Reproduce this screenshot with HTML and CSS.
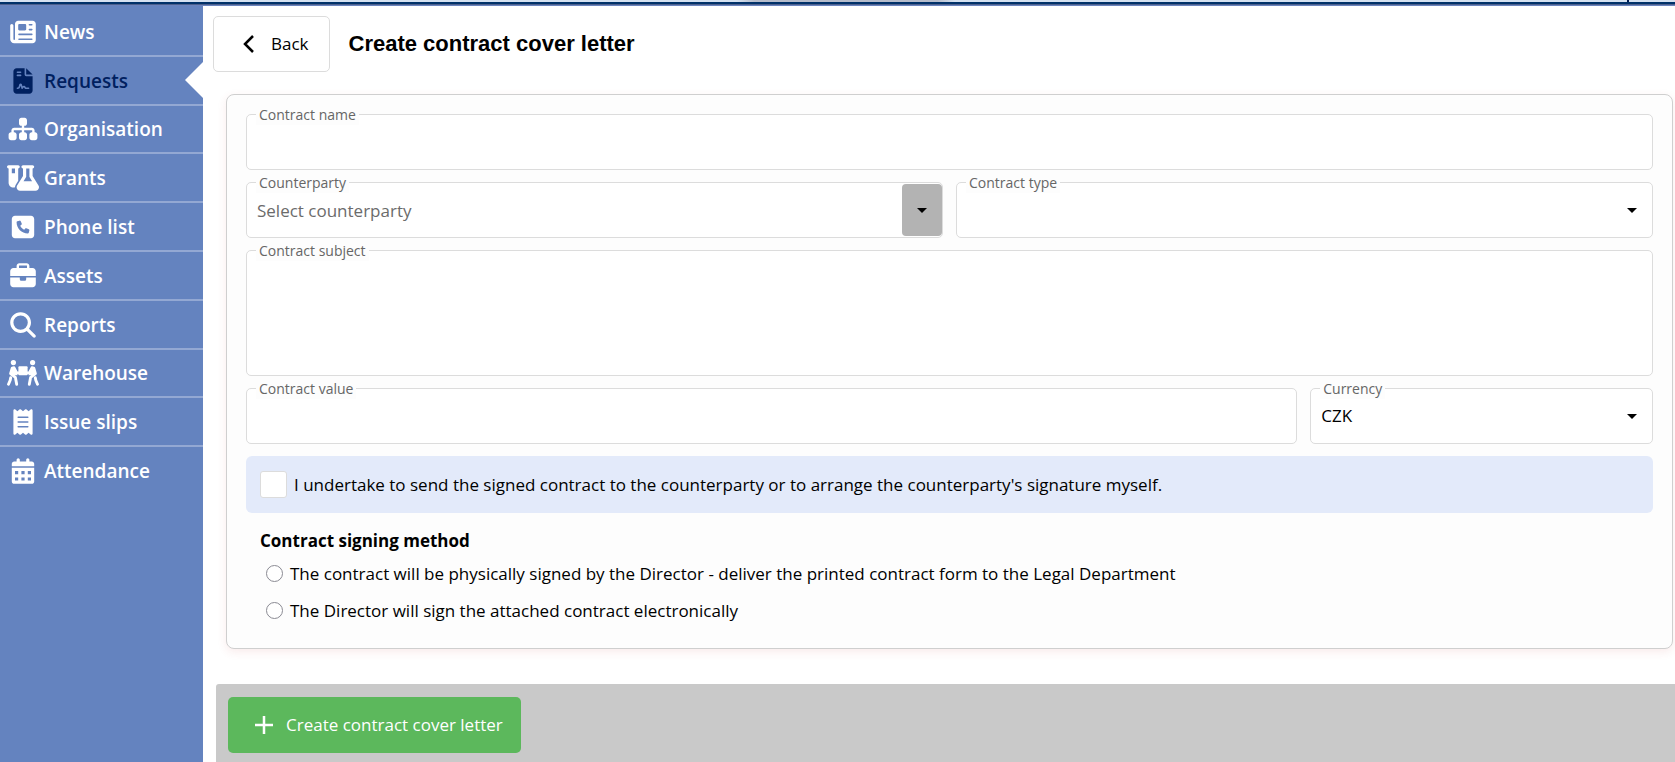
FILE: index.html
```html
<!DOCTYPE html>
<html lang="en">
<head>
<meta charset="utf-8">
<title>Create contract cover letter</title>
<link rel="stylesheet" href="styles.css">
</head>
<body>
<header class="topbar"><span class="topbar-shade"></span><span class="topbar-mark"></span></header>
<div class="shell">
  <nav class="sidebar">
    <ul class="menu">
      <li><a class="menu-link" href="#"><svg class="menu-icon" viewBox="-64 0 640 512"><path d="M96 96c0-35.300 28.700-64 64-64H448c35.300 0 64 28.700 64 64V416c0 35.300-28.700 64-64 64H80c-44.200 0-80-35.800-80-80V128c0-17.700 14.300-32 32-32s32 14.300 32 32V400c0 8.800 7.200 16 16 16s16-7.200 16-16V96zm64 24v80c0 13.300 10.700 24 24 24H296c13.300 0 24-10.700 24-24V120c0-13.300-10.700-24-24-24H184c-13.300 0-24 10.700-24 24zm208-8c0 8.800 7.200 16 16 16h48c8.800 0 16-7.200 16-16s-7.200-16-16-16H384c-8.800 0-16 7.200-16 16zm0 96c0 8.800 7.200 16 16 16h48c8.800 0 16-7.200 16-16s-7.200-16-16-16H384c-8.800 0-16 7.200-16 16zM160 304c0 8.800 7.200 16 16 16H432c8.800 0 16-7.200 16-16s-7.200-16-16-16H176c-8.800 0-16 7.200-16 16zm0 96c0 8.800 7.200 16 16 16H432c8.800 0 16-7.200 16-16s-7.200-16-16-16H176c-8.800 0-16 7.200-16 16z"/></svg>News</a></li>
      <li><a class="menu-link active" href="#" aria-current="page"><svg class="menu-icon" viewBox="-128 0 640 512"><path d="M64 0C28.700 0 0 28.700 0 64V448c0 35.300 28.700 64 64 64H320c35.300 0 64-28.700 64-64V160H256c-17.700 0-32-14.300-32-32V0H64zM256 0V128H384L256 0zM80 64h64c8.800 0 16 7.200 16 16s-7.200 16-16 16H80c-8.800 0-16-7.200-16-16s7.200-16 16-16zm0 64h64c8.800 0 16 7.200 16 16s-7.200 16-16 16H80c-8.800 0-16-7.200-16-16s7.200-16 16-16zm54.200 253.800c-6.100 20.300-24.800 34.200-46 34.200H80c-8.800 0-16-7.200-16-16s7.200-16 16-16h8.200c7.100 0 13.300-4.600 15.300-11.400l14.900-49.500c3.400-11.300 13.800-19.100 25.600-19.100s22.200 7.700 25.600 19.100l11.600 38.600c7.400-6.200 16.800-9.700 26.800-9.700c15.900 0 30.400 9 37.500 23.200l4.400 8.800H304c8.800 0 16 7.200 16 16s-7.200 16-16 16H240c-6.100 0-11.600-3.400-14.300-8.800l-8.800-17.700c-1.700-3.400-5.100-5.500-8.800-5.500s-7.200 2.100-8.800 5.500l-8.800 17.700c-2.900 5.900-9.200 9.400-15.700 8.800s-12.100-5.100-13.900-11.300L144 349l-9.800 32.800z"/></svg>Requests</a></li>
      <li><a class="menu-link" href="#"><svg class="menu-icon" viewBox="-32 0 640 512"><path d="M208 80c0-26.500 21.500-48 48-48h64c26.500 0 48 21.500 48 48v64c0 26.500-21.500 48-48 48h-8v40H464c30.900 0 56 25.100 56 56v32h8c26.500 0 48 21.500 48 48v64c0 26.500-21.500 48-48 48H464c-26.500 0-48-21.500-48-48V368c0-26.500 21.500-48 48-48h8V288c0-4.400-3.600-8-8-8H312v40h8c26.500 0 48 21.500 48 48v64c0 26.500-21.500 48-48 48H256c-26.500 0-48-21.500-48-48V368c0-26.500 21.500-48 48-48h8V280H112c-4.400 0-8 3.600-8 8v32h8c26.500 0 48 21.500 48 48v64c0 26.500-21.500 48-48 48H48c-26.500 0-48-21.500-48-48V368c0-26.500 21.500-48 48-48h8V288c0-30.900 25.100-56 56-56H264V192h-8c-26.500 0-48-21.500-48-48V80z"/></svg>Organisation</a></li>
      <li><a class="menu-link" href="#"><svg class="menu-icon" viewBox="0 0 640 512"><path d="M175 389.400c-9.800 16-15 34.300-15 53.100c-10 3.500-20.800 5.500-32 5.500c-53 0-96-43-96-96V64C14.300 64 0 49.700 0 32S14.300 0 32 0H96h64 64c17.700 0 32 14.300 32 32s-14.300 32-32 32V309.900l-49 79.600zM96 64v96h64V64H96zM352 0H480h32c17.700 0 32 14.300 32 32s-14.300 32-32 32V214.900L629.700 406.200c6.700 10.900 10.300 23.500 10.300 36.400c0 38.300-31.100 69.400-69.400 69.400H261.400c-38.300 0-69.400-31.100-69.400-69.400c0-12.800 3.600-25.400 10.300-36.400L320 214.900V64c-17.700 0-32-14.300-32-32s14.300-32 32-32h32zm32 64V224c0 5.900-1.600 11.700-4.700 16.800L330.500 320h171l-48.800-79.200c-3.100-5-4.700-10.800-4.700-16.800V64H384z"/></svg>Grants</a></li>
      <li><a class="menu-link" href="#"><svg class="menu-icon" viewBox="-96 0 640 512"><path d="M64 32C28.700 32 0 60.700 0 96V416c0 35.300 28.700 64 64 64H384c35.300 0 64-28.700 64-64V96c0-35.300-28.700-64-64-64H64zm90.700 96.700c9.700-2.600 19.900 2.300 23.700 11.600l20 48c3.400 8.200 1 17.600-5.800 23.200L168 231.700c16.600 35.200 45.100 63.700 80.300 80.300l20.200-24.700c5.600-6.800 15-9.200 23.200-5.800l48 20c9.300 3.900 14.200 14 11.600 23.700l-12 44C336.900 378 329 384 320 384C196.300 384 96 283.700 96 160c0-9 6-16.900 14.700-19.300l44-12z"/></svg>Phone list</a></li>
      <li><a class="menu-link" href="#"><svg class="menu-icon" viewBox="-64 0 640 512"><path d="M184 48H328c4.400 0 8 3.600 8 8V96H176V56c0-4.400 3.600-8 8-8zm-56 8V96H64C28.700 96 0 124.700 0 160v96H192 320 512V160c0-35.300-28.700-64-64-64H384V56c0-30.900-25.100-56-56-56H184c-30.900 0-56 25.100-56 56zM512 288H320v32c0 17.700-14.300 32-32 32H224c-17.700 0-32-14.300-32-32V288H0V416c0 35.300 28.700 64 64 64H448c35.300 0 64-28.700 64-64V288z"/></svg>Assets</a></li>
      <li><a class="menu-link" href="#"><svg class="menu-icon" viewBox="-64 0 640 512"><path d="M416 208c0 45.900-14.900 88.300-40 122.700L502.600 457.400c12.500 12.500 12.500 32.800 0 45.300s-32.800 12.500-45.300 0L330.700 376c-34.400 25.200-76.800 40-122.700 40C93.100 416 0 322.900 0 208S93.100 0 208 0S416 93.100 416 208zM208 352a144 144 0 1 0 0-288 144 144 0 1 0 0 288z"/></svg>Reports</a></li>
      <li><a class="menu-link" href="#"><svg class="menu-icon" viewBox="0 0 640 512"><circle cx="128" cy="48" r="52"/><circle cx="512" cy="48" r="52"/><rect x="228" y="120" width="184" height="180" rx="20"/><path d="M100 130h50l40 80 20 90h-90l-50-30zM540 130h-50l-40 80-20 90h90l50-30z"/><g fill="none" stroke="currentColor" stroke-width="58" stroke-linecap="round" stroke-linejoin="round"><path d="M138 150l54 104h48M502 150l-54 104h-48"/><path d="M104 160L72 270l96 74 26 138M536 160l32 110-96 74-26 138"/><path d="M74 350L64 400 30 480M566 350l10 50 34 80"/></g></svg>Warehouse</a></li>
      <li><a class="menu-link" href="#"><svg class="menu-icon" viewBox="-128 0 640 512"><path d="M14 2.200C22.500-1.700 32.500-.3 39.600 5.800L80 40.400 120.400 5.800c9-7.700 22.300-7.700 31.200 0L192 40.400 232.400 5.800c9-7.700 22.300-7.700 31.200 0L304 40.400 344.400 5.800c7.100-6.100 17.100-7.500 25.600-3.600s14 12.400 14 21.800V488c0 9.400-5.500 17.900-14 21.800s-18.500 2.500-25.600-3.600L304 471.600l-40.400 34.600c-9 7.700-22.300 7.700-31.200 0L192 471.600l-40.400 34.600c-9 7.700-22.300 7.700-31.200 0L80 471.600 39.600 506.200c-7.100 6.100-17.100 7.500-25.600 3.600S0 497.400 0 488V24C0 14.600 5.500 6.100 14 2.200zM96 144c-8.800 0-16 7.200-16 16s7.200 16 16 16H288c8.800 0 16-7.200 16-16s-7.200-16-16-16H96zM80 352c0 8.800 7.200 16 16 16H288c8.800 0 16-7.200 16-16s-7.200-16-16-16H96c-8.800 0-16 7.200-16 16zM96 240c-8.800 0-16 7.200-16 16s7.200 16 16 16H288c8.800 0 16-7.200 16-16s-7.200-16-16-16H96z"/></svg>Issue slips</a></li>
      <li><a class="menu-link" href="#"><svg class="menu-icon" viewBox="-96 0 640 512"><path fill-rule="evenodd" d="M128 0c17.700 0 32 14.300 32 32V64H288V32c0-17.700 14.300-32 32-32s32 14.300 32 32V64h48c26.500 0 48 21.500 48 48v48H0V112C0 85.500 21.500 64 48 64H96V32c0-17.700 14.300-32 32-32zM0 192H448V464c0 26.500-21.500 48-48 48H48c-26.500 0-48-21.500-48-48V192zM64 256v64h64v-64zM192 256v64h64v-64zM320 256v64h64v-64zM64 384v64h64v-64zM192 384v64h64v-64zM320 384v64h64v-64z"/></svg>Attendance</a></li>
    </ul>
  </nav>
  <main class="main">
    <div class="page-head">
      <button class="btn back" type="button"><svg class="chevron" viewBox="0 0 12 18"><path d="M10 1L2 9l8 8"/></svg>Back</button>
      <h1 class="title">Create contract cover letter</h1>
    </div>
    <form class="form" id="contract">
      <div class="field"><label class="label" for="name">Contract name</label><input class="control" id="name" type="text"></div>
      <div class="row halves">
        <div class="field combo"><label class="label" for="party">Counterparty</label><input class="control" id="party" type="text" placeholder="Select counterparty"><button class="combo-button" type="button" aria-label="Show counterparties"><svg class="arrow" viewBox="0 0 10 5"><path d="M0 0h10L5 5z"/></svg></button></div>
        <div class="field combo"><label class="label" for="type">Contract type</label><select class="control" id="type"><option></option></select><svg class="arrow select-arrow" viewBox="0 0 10 5"><path d="M0 0h10L5 5z"/></svg></div>
      </div>
      <div class="field"><label class="label" for="subject">Contract subject</label><textarea class="control subject" id="subject"></textarea></div>
      <div class="row value-row">
        <div class="field"><label class="label" for="value">Contract value</label><input class="control" id="value" type="text"></div>
        <div class="field combo"><label class="label" for="currency">Currency</label><select class="control" id="currency"><option>CZK</option></select><svg class="arrow select-arrow" viewBox="0 0 10 5"><path d="M0 0h10L5 5z"/></svg></div>
      </div>
      <label class="pledge"><input class="check" type="checkbox">I undertake to send the signed contract to the counterparty or to arrange the counterparty's signature myself.</label>
      <fieldset class="method">
        <legend class="method-title">Contract signing method</legend>
        <label class="option"><input class="radio" type="radio" name="method">The contract will be physically signed by the Director - deliver the printed contract form to the Legal Department</label>
        <label class="option"><input class="radio" type="radio" name="method">The Director will sign the attached contract electronically</label>
      </fieldset>
    </form>
    <footer class="actions">
      <button class="btn create" type="submit" form="contract"><svg class="plus" viewBox="0 0 20 20"><path d="M10 1v18M1 10h18"/></svg>Create contract cover letter</button>
    </footer>
  </main>
</div>
</body>
</html>
```
FILE: styles.css
```css
* { box-sizing: border-box; }
body {
  margin: 0;
  min-height: 100vh;
  display: flex;
  flex-direction: column;
  font-family: "Open Sans", "Noto Sans", sans-serif;
  font-size: 17px;
  line-height: 24px;
  color: #000;
  background: #fff;
}
button, input, select, textarea { font: inherit; color: inherit; margin: 0; }

.topbar {
  position: relative;
  height: 6px;
  background: linear-gradient(#d5e1f0 2px, #003169 2px, #003169 4px, #4b5f8c 4px, #4b5f8c 5px, #6a83be 5px);
}
.topbar-shade { position: absolute; left: 44%; width: 13%; top: 0; height: 2px; background: linear-gradient(90deg, transparent, #b6bccb 8%, #b6bccb 92%, transparent); }
.topbar-mark { position: absolute; right: 46px; width: 2px; top: 0; height: 2px; background: #001a50; }

.shell { flex: 1; display: flex; }
.sidebar { flex: none; width: 203px; background: #6483bf; }
.menu { list-style: none; margin: 0; padding: 0; display: grid; grid-auto-rows: 1fr; min-height: 488px; }
.menu li { display: flex; border-top: 2px solid #93a8d3; }
.menu li:first-child { border-top-color: transparent; }
.menu-link {
  position: relative;
  flex: 1;
  display: flex;
  align-items: center;
  gap: 5px;
  padding: 1px 7px 0;
  color: #fff;
  font-size: 19px;
  font-weight: 600;
  text-decoration: none;
}
.menu-icon { width: 32px; height: 26px; fill: currentColor; }
.active { color: #00205f; }
.active::after {
  content: "";
  position: absolute;
  right: 0;
  top: 50%;
  margin-top: -18px;
  border: 18px solid transparent;
  border-left: 0;
  border-right-color: #fff;
}

.main { flex: 1; min-width: 0; display: flex; flex-direction: column; }
.page-head { display: flex; align-items: center; gap: 19px; padding: 10px 10px 22px; }
.btn { display: flex; align-items: center; height: 56px; border-radius: 5px; }
.back { gap: 16px; padding: 0 20px 0 29px; border: 1px solid #dcdcdc; background: #fff; }
.chevron { width: 12px; height: 18px; fill: none; stroke: #000; stroke-width: 2.500; }
.title { margin: 0; font: bold 22px/28px "Liberation Sans", Arial, sans-serif; }

.form {
  display: flex;
  flex-direction: column;
  gap: 12px;
  margin: 0 2px 35px 23px;
  padding: 19px;
  border: 1px solid #cfcfcf;
  border-radius: 8px;
  background: #fdfdfd;
  box-shadow: 0 3px 10px rgba(200, 60, 60, .1);
}
.row { display: grid; gap: 13px; }
.halves { grid-template-columns: 1fr 1fr; }
.value-row { grid-template-columns: 1052fr 343fr; }
.field { position: relative; display: flex; }
.label { position: absolute; left: 10px; top: -9px; padding: 0 3px; font-size: 14px; line-height: 20px; color: #666; background: #fdfdfd; }
.control {
  flex: 1;
  min-width: 0;
  height: 56px;
  padding: 0 10px;
  border: 1px solid #dcdcdc;
  border-radius: 5px;
  background: #fff;
  appearance: none;
  outline: 0;
}
.control::placeholder { color: #6b6b6b; opacity: 1; }
.subject { height: 126px; resize: none; }
.combo-button { position: absolute; right: 1px; top: 2px; bottom: 2px; width: 40px; border: 0; padding: 0; border-radius: 4px; background: #b3b3b3; display: grid; place-items: center; }
.arrow { width: 10px; height: 5px; fill: #000; }
.select-arrow { position: absolute; right: 16px; top: 26px; pointer-events: none; }

.pledge { display: flex; align-items: center; gap: 7px; height: 57px; padding: 0 14px; border-radius: 6px; background: #e3eafa; }
.check { appearance: none; width: 27px; height: 27px; border: 1px solid #dcdcdc; border-radius: 3px; background: #fff; }
.method { margin: 0; padding: 0 14px; border: 0; min-width: 0; }
.method-title { padding: 4px 0 2px; font-weight: 700; }
.option { display: flex; align-items: center; gap: 7px; height: 37px; padding-left: 6px; }
.radio { appearance: none; width: 17px; height: 17px; border: 1px solid #8a8a93; border-radius: 50%; background: #fff; }

.actions { flex: 1; margin-left: 13px; padding: 13px 12px 10px; border-top-left-radius: 3px; background: #c9c9c9; }
.create { gap: 12px; padding: 0 18px 0 26px; border: 0; color: #fff; background: #5cb85c; }
.plus { width: 20px; height: 20px; fill: none; stroke: #fff; stroke-width: 2.500; }
```
